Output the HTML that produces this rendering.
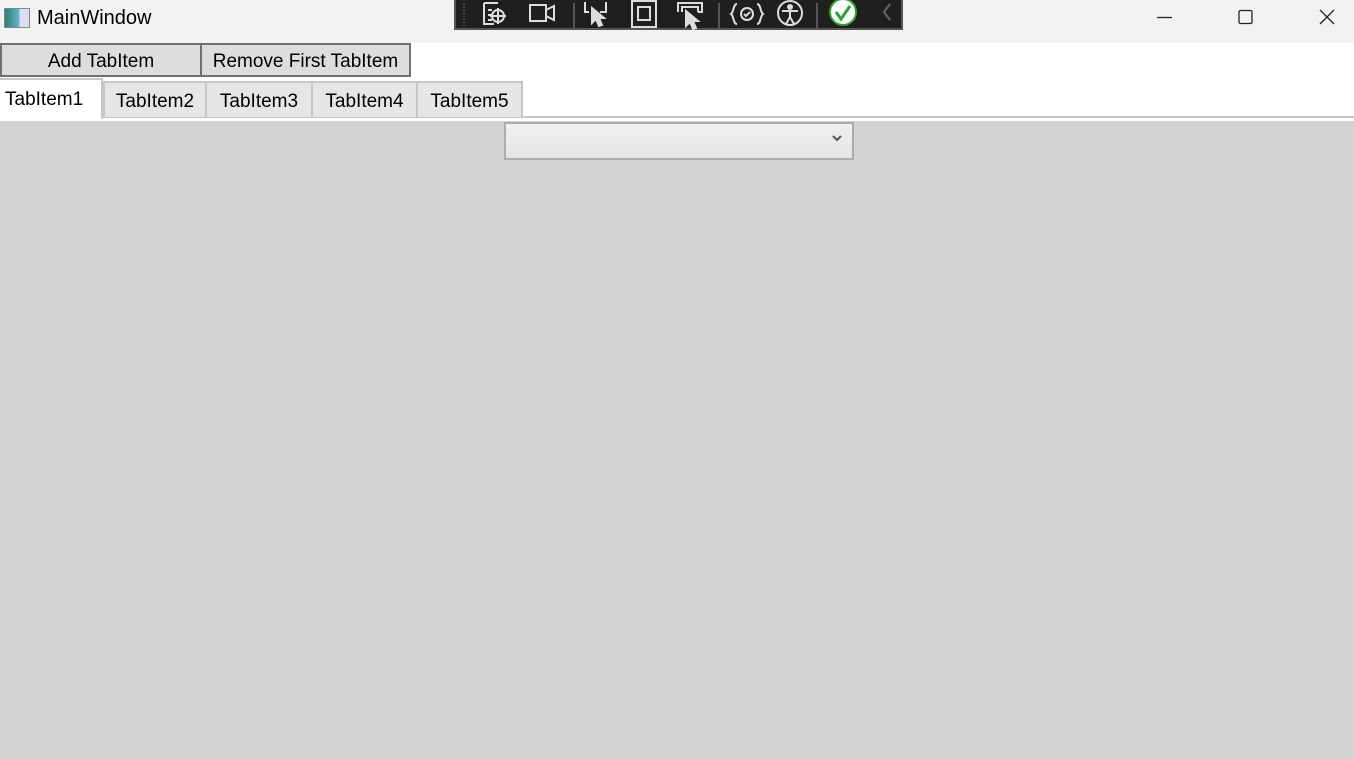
<!DOCTYPE html>
<html><head><style>
body{margin:0;width:1354px;height:759px;overflow:hidden;background:#d3d3d3;font-family:"Segoe UI","Liberation Sans",sans-serif;position:relative}
div{position:absolute;box-sizing:border-box}
.t{font-size:19px;color:#000}
.btn{background:#dddddd;border:2px solid #707070;font-size:19px;text-align:center;line-height:34px;top:43px;height:34px}
.tab{background:#e6e6e6;border:2px solid #c6c6c6;border-bottom:none;font-size:19px;text-align:center;line-height:38px;top:81px;height:36px}
</style></head><body>
<div style="left:0;top:0;width:1354px;height:43px;background:#f3f2f1"></div>
<div style="left:4px;top:8px;width:26px;height:20px;background:linear-gradient(90deg,#2e7d6b,#6db3d8 60%,#dde 60%);border:1px solid #7a8a9a"></div>
<div class="t" style="left:37px;top:7px;font-size:20px">MainWindow</div>
<div style="left:454px;top:0;width:449px;height:30px;background:#1f1f1f;border:2px solid #555;border-top:none"></div>
<svg style="position:absolute;left:454px;top:0" width="449" height="30" fill="none" stroke="#ddd" stroke-width="2">
<path d="M10 4v22" stroke="#555" stroke-dasharray="1 2"/>
<path d="M30 3h14M30 3v21h10M34 10h4M34 15h4M34 20h4"/><circle cx="44" cy="16" r="6"/><path d="M44 8v16M36 16h16"/>
<rect x="76" y="5" width="16" height="16"/><path d="M92 10l8-4v14l-8-4"/>
<path d="M120 3v26" stroke="#555"/>
<path d="M131 2v10h4M152 2v10h-6"/><path d="M138 8l12 10h-5l3 7-3 1-3-7-4 4z" fill="#ddd"/>
<rect x="178" y="1" width="24" height="26"/><rect x="184" y="7" width="12" height="13"/>
<path d="M224 12V3h24v9h-4M228 12V7h16v5"/><path d="M232 11l12 10h-5l3 7-3 1-3-7-4 4z" fill="#ddd"/>
<path d="M265 3v26" stroke="#555"/>
<path d="M283 4c-4 0-3 8-6 10 3 2 2 10 6 10M303 4c4 0 3 8 6 10-3 2-2 10-6 10"/><circle cx="293" cy="14" r="6"/><path d="M290 14l2 2 4-4"/>
<circle cx="336" cy="13" r="12"/><circle cx="336" cy="7" r="2" fill="#ddd"/><path d="M328 11h16M336 11v6l-4 7M336 17l4 7"/>
<path d="M363 3v26" stroke="#555"/>
<circle cx="389" cy="12" r="13" fill="#fff" stroke="#2aa52a" stroke-width="2"/><path d="M382 12l5 7 9-13" stroke="#2aa52a" stroke-width="3"/>
<path d="M436 4l-6 8 6 8" stroke="#666"/>
</svg>
<svg style="position:absolute;left:1130px;top:0" width="224" height="40" fill="none" stroke="#222" stroke-width="1.3">
<path d="M27 17.5h15"/><rect x="109" y="10.5" width="13" height="13" rx="1.5"/><path d="M190 10l14 14M204 10l-14 14"/>
</svg>
<div style="left:0;top:43px;width:1354px;height:78px;background:#fff"></div>
<div class="btn" style="left:0;width:202px">Add TabItem</div>
<div class="btn" style="left:200px;width:211px">Remove First TabItem</div>
<div style="left:0;top:116px;width:1354px;height:2px;background:#c6c6c6"></div>
<div class="tab" style="left:103px;width:104px">TabItem2</div>
<div class="tab" style="left:205px;width:108px">TabItem3</div>
<div class="tab" style="left:311px;width:107px">TabItem4</div>
<div class="tab" style="left:416px;width:107px">TabItem5</div>
<div style="left:0;top:78px;width:103px;height:41px;background:#fff;border-top:2px solid #c6c6c6;border-right:2px solid #c6c6c6;font-size:19px;line-height:40px;padding-left:5px">TabItem1</div>
<div style="left:504px;top:122px;width:350px;height:38px;background:linear-gradient(#f0f0f0,#e5e5e5);border:2px solid #acacac"></div>
<svg style="position:absolute;left:830px;top:133px" width="14" height="10" fill="none" stroke="#555" stroke-width="2"><path d="M3 3l4 4 4-4"/></svg>
</body></html>
